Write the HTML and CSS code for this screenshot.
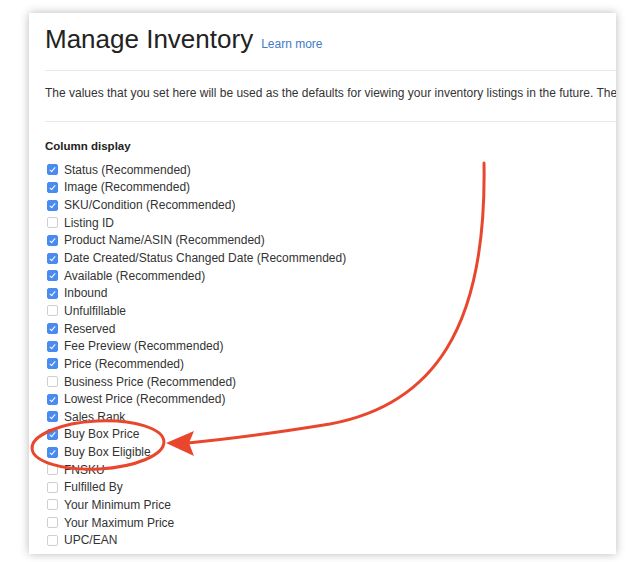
FILE: index.html
```html
<!DOCTYPE html>
<html>
<head>
<meta charset="utf-8">
<link rel="stylesheet" href="styles.css">
</head>
<body>
<div class="shot">
  <div class="card">
    <div class="head">
      <h1 class="title">Manage Inventory</h1>
      <a class="learn">Learn more</a>
    </div>
    <p class="intro">The values that you set here will be used as the defaults for viewing your inventory listings in the future. The</p>
    <div class="section">
      <h2 class="sec-title">Column display</h2>
      <ul class="opts">
        <li><span class="cb on"></span>Status (Recommended)</li>
        <li><span class="cb on"></span>Image (Recommended)</li>
        <li><span class="cb on"></span>SKU/Condition (Recommended)</li>
        <li><span class="cb"></span>Listing ID</li>
        <li><span class="cb on"></span>Product Name/ASIN (Recommended)</li>
        <li><span class="cb on"></span>Date Created/Status Changed Date (Recommended)</li>
        <li><span class="cb on"></span>Available (Recommended)</li>
        <li><span class="cb on"></span>Inbound</li>
        <li><span class="cb"></span>Unfulfillable</li>
        <li><span class="cb on"></span>Reserved</li>
        <li><span class="cb on"></span>Fee Preview (Recommended)</li>
        <li><span class="cb on"></span>Price (Recommended)</li>
        <li><span class="cb"></span>Business Price (Recommended)</li>
        <li><span class="cb on"></span>Lowest Price (Recommended)</li>
        <li><span class="cb on"></span>Sales Rank</li>
        <li><span class="cb on"></span>Buy Box Price</li>
        <li><span class="cb on"></span>Buy Box Eligible</li>
        <li><span class="cb"></span>FNSKU</li>
        <li><span class="cb"></span>Fulfilled By</li>
        <li><span class="cb"></span>Your Minimum Price</li>
        <li><span class="cb"></span>Your Maximum Price</li>
        <li><span class="cb"></span>UPC/EAN</li>
      </ul>
    </div>
  </div>
  <svg class="annot" width="632" height="562" viewBox="0 0 632 562">
    <path d="M484,163 C487,330 432,405 330,424 Q250,437 188,443" fill="none" stroke="#e9472d" stroke-width="3" stroke-linecap="round"/>
    <polygon points="166,443 194,431 189,443 194,456" fill="#e9472d"/>
    <ellipse cx="98" cy="445" rx="66" ry="24" fill="none" stroke="#e9472d" stroke-width="3" transform="rotate(-3 98 445)"/>
  </svg>
</div>
</body>
</html>
```

FILE: styles.css
```css
html, body {
  margin: 0;
  padding: 0;
  background: #ffffff;
}

.shot {
  position: relative;
  width: 632px;
  height: 562px;
  overflow: hidden;
  font-family: "Liberation Sans", Arial, sans-serif;
  color: #333;
}

.card {
  margin: 13px 0 0 29px;
  width: 587px;
  height: 541px;
  box-sizing: border-box;
  padding-left: 16px;
  background: #fff;
  box-shadow: 0 0 9px rgba(0, 0, 0, 0.28);
  overflow: hidden;
}

.head {
  display: flex;
  align-items: baseline;
  gap: 8px;
  padding: 13px 0 18px;
  border-bottom: 1px solid #e8e8e8;
}

.title {
  margin: 0;
  font-size: 26px;
  line-height: 26px;
  font-weight: normal;
  color: #222;
}

.learn {
  font-size: 12px;
  color: #3f7bc6;
}

.intro {
  margin: 0;
  padding: 15px 0 21px;
  font-size: 12px;
  line-height: 14px;
  white-space: nowrap;
  color: #333;
  border-bottom: 1px solid #e8e8e8;
}

.sec-title {
  margin: 16px 0 7px;
  font-size: 11.5px;
  line-height: 16px;
  font-weight: bold;
  color: #222;
}

.opts {
  list-style: none;
  margin: 0;
  padding: 0;
}

.opts li {
  display: flex;
  align-items: center;
  height: 17.65px;
  font-size: 12px;
  color: #333;
}

.cb {
  width: 9px;
  height: 9px;
  margin: 0 6px 0 2px;
  border: 1px solid #cfcfcf;
  border-radius: 2px;
  background: #fff;
  position: relative;
  flex: none;
}

.cb.on {
  background: #4a8bef;
  border-color: #4a8bef;
}

.cb.on::after {
  content: "";
  position: absolute;
  left: 3px;
  top: 1px;
  width: 2px;
  height: 5px;
  border: solid #fff;
  border-width: 0 1.3px 1.3px 0;
  transform: rotate(40deg);
}

.annot {
  position: absolute;
  left: 0;
  top: 0;
}
```
